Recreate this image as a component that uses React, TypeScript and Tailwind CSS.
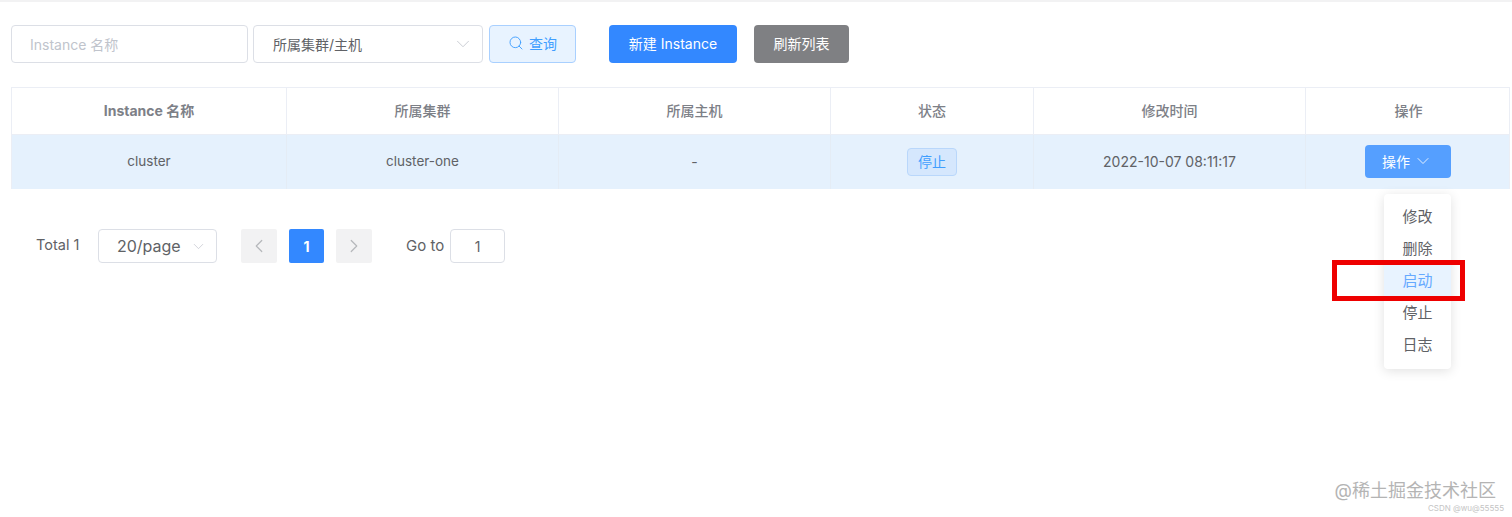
import React from 'react';
import { ChevronDown, ChevronLeft, ChevronRight, Search } from 'lucide-react';

const FONT = "font-['Inter','Noto_Sans_CJK_SC',sans-serif]";
const COLUMNS = 'grid grid-cols-[275px_272px_272px_203px_272px_205px]';

const headers = ['Instance 名称', '所属集群', '所属主机', '状态', '修改时间', '操作'];
const menuItems = ['修改', '删除', '启动', '停止', '日志'];

const HeaderCell: React.FC<{ label: string; index: number }> = ({ label, index }) => (
  <div
    className={`flex items-center justify-center pb-[2px] text-[14px] text-[#7d8087] ${index === 0 ? 'font-bold' : 'font-medium'} ${
      index < 5 ? 'border-r border-[#ebeef5]' : ''
    }`}
  >
    {label}
  </div>
);

const BodyCell: React.FC<{ children: React.ReactNode; last?: boolean }> = ({ children, last }) => (
  <div
    className={`flex items-center justify-center text-[14px] text-[#606266] ${last ? '' : 'border-r border-[#e4ecf5]'}`}
  >
    {children}
  </div>
);

const Toolbar = () => (
  <div className="flex h-[38px] items-stretch pl-[11px]">
    <div className="flex w-[237px] items-center rounded-[4px] border border-[#dcdfe6] pl-[18px] text-[14px] text-[#c0c4cc]">
      Instance 名称
    </div>
    <div className="ml-[5px] flex w-[230px] items-center justify-between rounded-[4px] border border-[#dcdfe6] pl-[19px] pr-[8px] text-[14px] text-[#606266]">
      <span>所属集群/主机</span>
      <ChevronDown size={22} strokeWidth={0.9} className="text-[#c0c4cc]" />
    </div>
    <button className="ml-[6px] flex w-[87px] items-center justify-center gap-[5px] rounded-[4px] border border-[#a9d0ff] bg-[#e8f3ff] pb-[2px] text-[14px] text-[#409eff]">
      <Search size={16} strokeWidth={1.4} />
      <span>查询</span>
    </button>
    <button className="ml-[33px] w-[128px] rounded-[4px] bg-[#3388ff] pb-[2px] text-[14px] text-white">新建 Instance</button>
    <button className="ml-[17px] w-[95px] rounded-[4px] bg-[#7f8083] pb-[2px] text-[14px] text-white">刷新列表</button>
  </div>
);

const DataTable = () => (
  <div className="mx-[11px] mt-[24px] w-[1499px] border-t border-l border-r border-[#ebeef5]">
    <div className={`${COLUMNS} h-[47px] border-b border-[#ebeef5]`}>
      {headers.map((h, i) => (
        <HeaderCell key={h} label={h} index={i} />
      ))}
    </div>
    <div className={`${COLUMNS} h-[54px] bg-[#e5f1fd]`}>
      <BodyCell>
        <span className="pb-[1px] text-[13.5px]">cluster</span>
      </BodyCell>
      <BodyCell>
        <span className="pb-[1px] text-[13.5px]">cluster-one</span>
      </BodyCell>
      <BodyCell>
        <span className="pb-[1px]">-</span>
      </BodyCell>
      <BodyCell>
        <span className="mb-[1px] flex h-[28px] w-[50px] items-center justify-center rounded-[4px] border border-[#b9d7fb] bg-[#d5e7fd] pb-[1px] text-[14px] text-[#409eff]">
          停止
        </span>
      </BodyCell>
      <BodyCell>
        <span className="pb-[1px]">2022-10-07 08:11:17</span>
      </BodyCell>
      <BodyCell last>
        <button className="mb-[1px] mr-[2px] flex h-[33px] w-[86px] items-center justify-center gap-[3px] rounded-[4px] bg-[#559fff] pb-[1px] text-[14px] text-white">
          <span>操作</span>
          <ChevronDown size={20} strokeWidth={1} />
        </button>
      </BodyCell>
    </div>
  </div>
);

const Pagination = () => (
  <div className="mt-[40px] flex h-[34px] items-center pl-[36px] text-[14px] text-[#606266]">
    <span className="w-[62px] pb-[2px] text-[14.5px]">Total 1</span>
    <div className="flex h-full w-[119px] items-center justify-between rounded-[4px] border border-[#dcdfe6] pl-[18px] pr-[9px] text-[16px]">
      <span>20/page</span>
      <ChevronDown size={17} strokeWidth={1} className="text-[#c0c4cc]" />
    </div>
    <div className="ml-[24px] flex h-full w-[36px] items-center justify-center rounded-[2px] bg-[#f2f2f3] text-[#b5b7bb]">
      <ChevronLeft size={22} strokeWidth={1.3} />
    </div>
    <div className="ml-[12px] flex h-full w-[35px] items-center justify-center rounded-[2px] bg-[#3388ff] font-bold text-white">
      1
    </div>
    <div className="ml-[12px] flex h-full w-[36px] items-center justify-center rounded-[2px] bg-[#f2f2f3] text-[#b5b7bb]">
      <ChevronRight size={22} strokeWidth={1.3} />
    </div>
    <span className="ml-[34px] w-[44px] text-[15px]">Go to</span>
    <div className="flex h-full w-[55px] items-center justify-center rounded-[4px] border border-[#dcdfe6]">1</div>
  </div>
);

export default function App() {
  return (
    <div className={`${FONT} relative h-[517px] w-[1512px] overflow-hidden bg-white`}>
      <div className="h-[2px] bg-[#f2f2f3]" />
      <div className="pt-[23px]">
        <Toolbar />
        <DataTable />
        <Pagination />
      </div>

      {/* open dropdown of the row action */}
      <div className="absolute left-[1384px] top-[194px] flex h-[175px] w-[67px] flex-col rounded-[4px] bg-white pb-[6px] pt-[7px] shadow-[0_2px_12px_rgba(0,0,0,0.12)]">
        {menuItems.map((item) => (
          <div
            key={item}
            className={`flex h-[32px] items-center justify-center text-[15px] ${
              item === '启动' ? 'bg-[#e8f3ff] text-[#66a9ff]' : 'text-[#606266]'
            }`}
          >
            {item}
          </div>
        ))}
      </div>

      {/* annotation drawn over the screenshot */}
      <div className="absolute left-[1332px] top-[260px] h-[41px] w-[133px] border-[5px] border-[#ee0000]" />

      <div className="absolute right-[16px] top-[479px] text-[18px] leading-[24px] text-[#b4b4b4]">@稀土掘金技术社区</div>
      <div className="absolute right-[8px] top-[503px] text-[8px] leading-[10px] text-[#c4c4c4]">CSDN @wu@55555</div>
    </div>
  );
}
